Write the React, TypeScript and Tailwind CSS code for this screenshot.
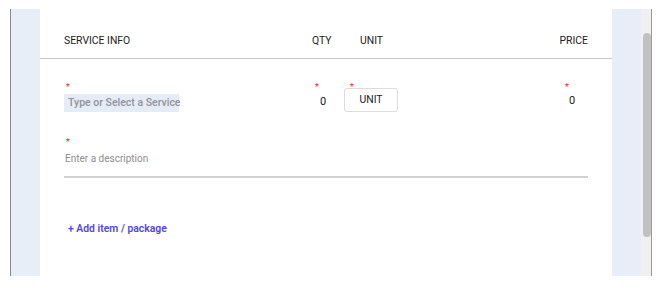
export default function App() {
  return (
    <div
      className="w-[663px] h-[288px] bg-white pt-[9px] pl-[10px]"
      style={{ fontFamily: "Roboto, 'Noto Sans', sans-serif" }}
    >
      <div className="flex h-[267px] w-[643px]">
        {/* left border + gutter */}
        <div className="w-px bg-[#8a8a8a]" />
        <div className="w-[29px] bg-[#e8eef7]" />

        {/* main card */}
        <div className="w-[572px] bg-white flex flex-col">
          {/* header */}
          <div className="flex items-start h-[50px] px-6 pt-[25px] border-b border-[#c6c6c6] text-[10.4px] leading-[13px] text-[#222]">
            <div className="w-[248px]">SERVICE INFO</div>
            <div className="w-[48px]">QTY</div>
            <div className="w-[40px]">UNIT</div>
            <div className="flex-1 text-right">PRICE</div>
          </div>

          {/* item row */}
          <div className="flex px-6 pt-[23px] text-[11px]">
            <div className="w-[248px]">
              <div className="text-[#ff1a1a] text-[9px] leading-[10px] pl-[2px]">*</div>
              <div className="mt-[2px] h-[18px] w-[115px] bg-[#e6ecf5] flex items-center pl-[4px] text-[10.5px] font-medium text-[#8e939c] whitespace-nowrap">
                Type or Select a Service
              </div>
            </div>
            <div className="w-[32px]">
              <div className="text-[#ff1a1a] text-[9px] leading-[10px] pl-[3px]">*</div>
              <div className="pt-[2px] pl-[8px] text-[11px] text-[#222]">0</div>
            </div>
            <div className="w-[54px]">
              <div className="text-[#ff1a1a] text-[9px] leading-[10px] pl-[6px]">*</div>
              <div className="h-[24px] -mt-[4px] border border-[#dcdcdc] rounded-[3px] flex items-center justify-center text-[10.4px] text-[#222]">
                UNIT
              </div>
            </div>
            <div className="flex-1" />
            <div className="w-[24px]">
              <div className="text-[#ff1a1a] text-[9px] leading-[10px] pl-[1px]">*</div>
              <div className="pt-[1px] pl-[5px] text-[11px] text-[#222]">0</div>
            </div>
          </div>

          {/* description */}
          <div className="px-6 pt-[25px]">
            <div className="text-[#ff1a1a] text-[9px] leading-[10px] pl-[2px]">*</div>
            <div className="border-b-2 border-[#d2d2d2] pt-[5px] pb-[10px] pl-[1px] text-[10px] leading-[14px] text-[#8d8d8d]">
              Enter a description
            </div>
          </div>

          {/* add item */}
          <div className="px-7 pt-[37px]">
            <button className="text-[10.4px] leading-[13px] font-semibold text-[#4f46e5]">
              + Add item / package
            </button>
          </div>
        </div>

        {/* right gutter */}
        <div className="w-[29px] bg-[#e8eef7]" />

        {/* scrollbar */}
        <div className="w-[10px] bg-[#f0f0f0] relative">
          <div className="absolute left-[2px] right-0 top-[24px] h-[204px] rounded-full bg-[#c1c1c1]" />
        </div>
        <div className="w-px bg-[#9a9a9a]" />
      </div>
    </div>
  );
}
